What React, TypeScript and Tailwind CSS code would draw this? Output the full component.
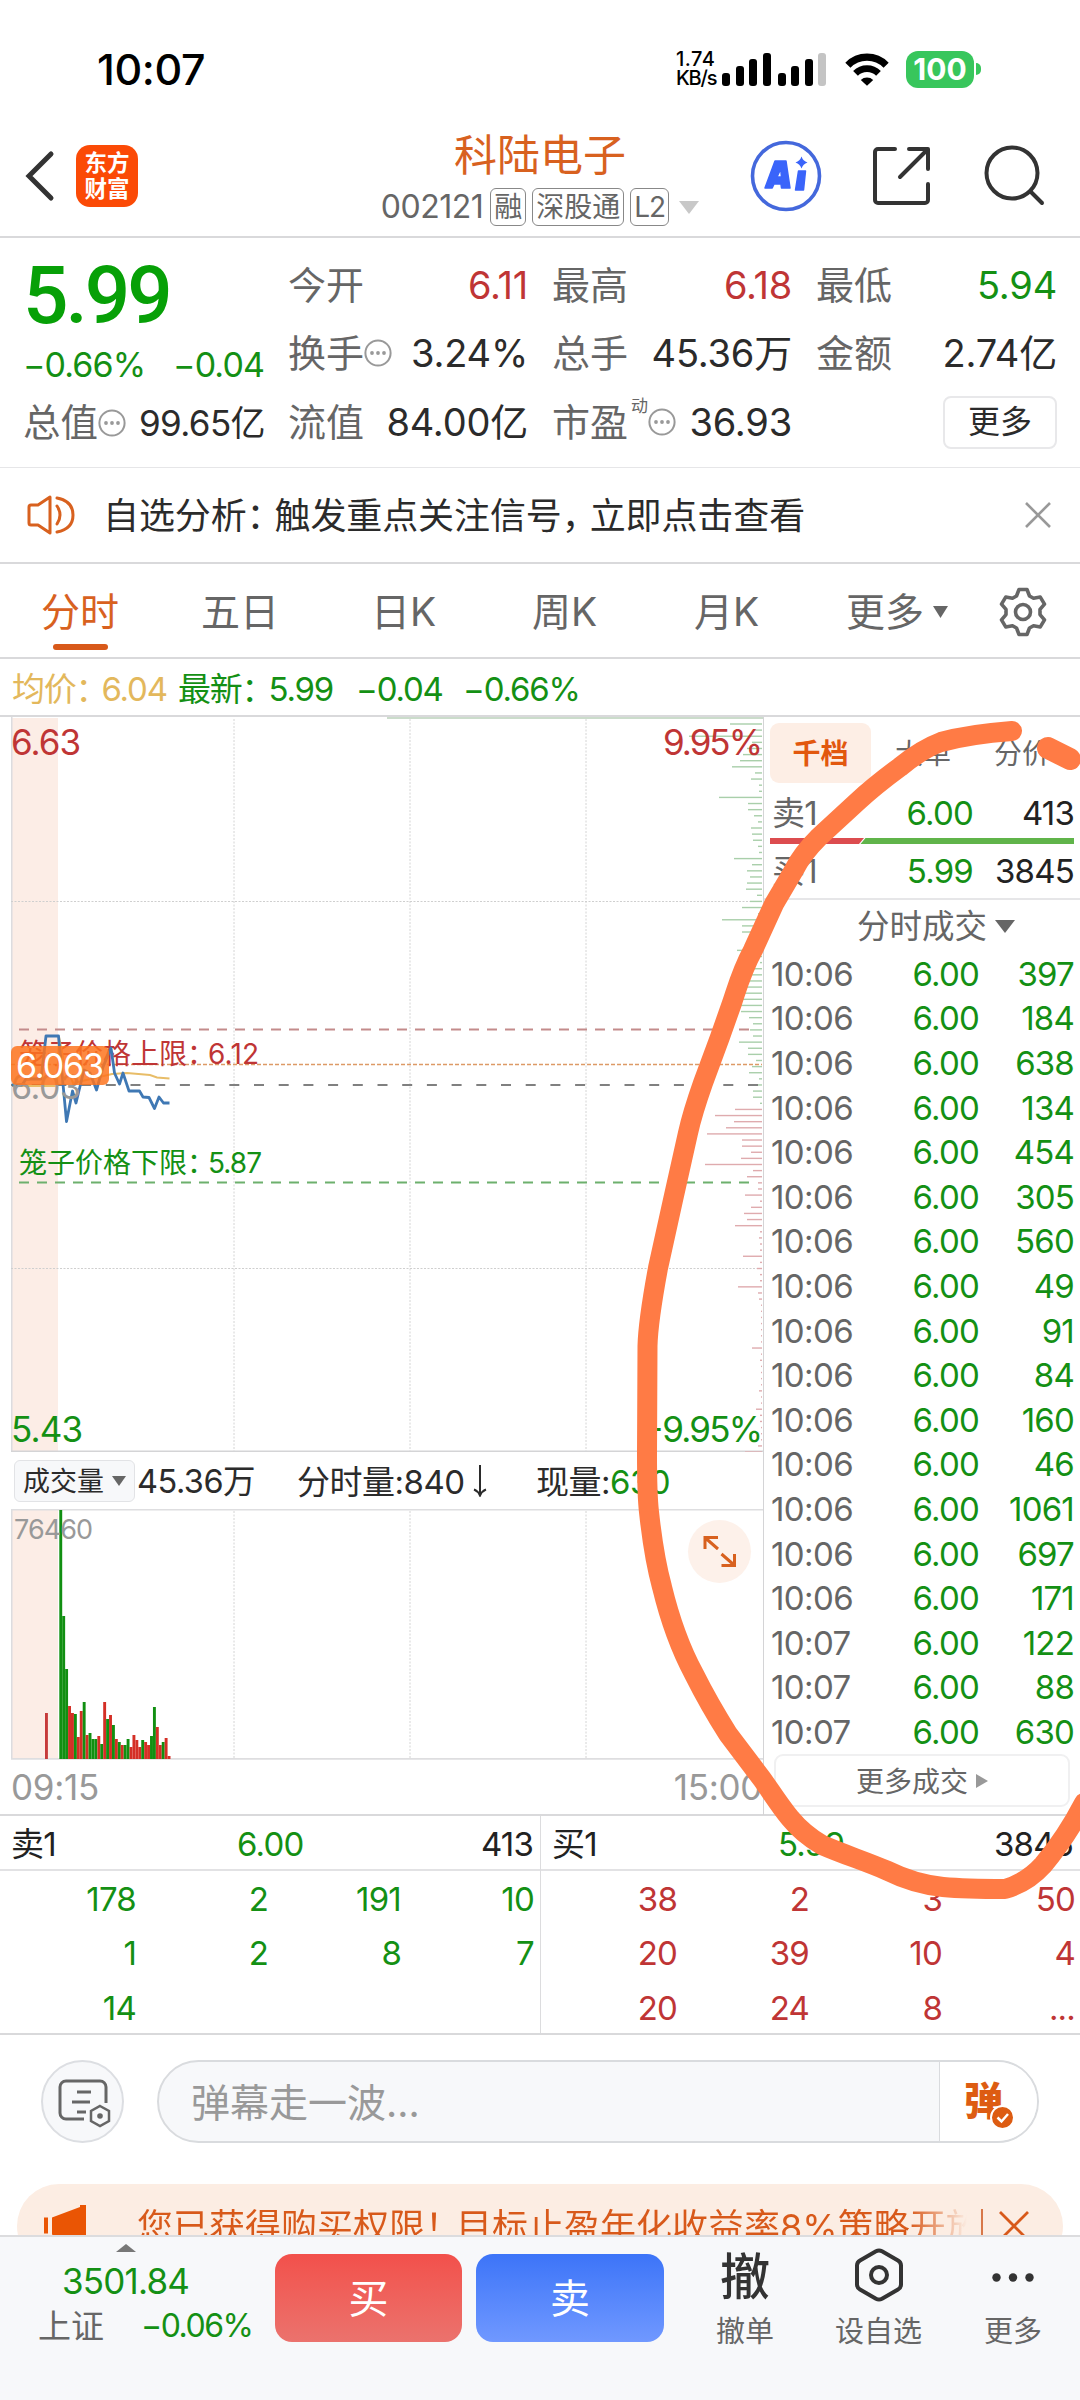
import { clsx } from 'clsx';

type Tone = 'up' | 'down' | 'plain';

const toneClass: Record<Tone, string> = {
  up: 'text-[#bf3535]',
  down: 'text-[#149014]',
  plain: 'text-[#2b2b2b]',
};

const QUOTES: { label: string; value: string; tone: Tone; hint?: boolean; sup?: string }[] = [
  { label: '今开', value: '6.11', tone: 'up' },
  { label: '最高', value: '6.18', tone: 'up' },
  { label: '最低', value: '5.94', tone: 'down' },
  { label: '换手', value: '3.24%', tone: 'plain', hint: true },
  { label: '总手', value: '45.36万', tone: 'plain' },
  { label: '金额', value: '2.74亿', tone: 'plain' },
  { label: '流值', value: '84.00亿', tone: 'plain' },
  { label: '市盈', value: '36.93', tone: 'plain', hint: true, sup: '动' },
];

const TRADES: [string, string, string][] = [
  ['10:06', '6.00', '397'],
  ['10:06', '6.00', '184'],
  ['10:06', '6.00', '638'],
  ['10:06', '6.00', '134'],
  ['10:06', '6.00', '454'],
  ['10:06', '6.00', '305'],
  ['10:06', '6.00', '560'],
  ['10:06', '6.00', '49'],
  ['10:06', '6.00', '91'],
  ['10:06', '6.00', '84'],
  ['10:06', '6.00', '160'],
  ['10:06', '6.00', '46'],
  ['10:06', '6.00', '1061'],
  ['10:06', '6.00', '697'],
  ['10:06', '6.00', '171'],
  ['10:07', '6.00', '122'],
  ['10:07', '6.00', '88'],
  ['10:07', '6.00', '630'],
];

// order book depth, top (limit up) to bottom (limit down)
const DEPTH = [
  32, 8, 73, 10, 15, 19, 22, 30, 7, 11, 3, 3, 43, 14, 14, 8, 4, 11, 10, 9, 4, 3, 28, 10, 15, 12, 15, 16, 5, 12,
  20, 4, 40, 20, 20, 10, 10, 25, 3, 2, 10, 12, 14, 17, 19, 20, 22, 21, 13, 9, 12, 9, 23, 14, 14, 6, 10, 13, 3, 11,
  9, 9, 2, 27, 47, 28, 36, 55, 20, 20, 11, 21, 57, 9, 15, 4, 4, 17, 2, 11, 18, 15, 27, 2, 3, 2, 2, 19, 2, 5,
  2, 2, 24, 4, 3, 1, 1, 1, 1, 1, 1, 1, 10, 1, 2, 1, 1, 1, 1, 3, 1, 1, 6, 2, 2, 1, 1, 1, 4, 17,
];
const SELL_LEVELS = 63;

const VOLUME: [number, 'r' | 'g'][] = [
  [249, 'g'], [143, 'g'], [90, 'g'], [53, 'r'], [46, 'r'], [45, 'g'], [22, 'r'], [48, 'r'], [57, 'g'], [24, 'r'],
  [26, 'g'], [20, 'g'], [20, 'g'], [23, 'r'], [15, 'g'], [57, 'r'], [40, 'g'], [44, 'r'], [34, 'g'], [20, 'r'],
  [17, 'g'], [14, 'r'], [14, 'g'], [20, 'g'], [12, 'r'], [24, 'r'], [19, 'r'], [12, 'r'], [19, 'g'], [17, 'r'],
  [14, 'r'], [23, 'g'], [52, 'g'], [32, 'r'], [14, 'r'], [17, 'g'], [21, 'r'], [3, 'r'],
];

const GRID_X = [223, 399, 575];

function Hint() {
  return (
    <svg className="size-[28px] shrink-0" viewBox="0 0 28 28">
      <circle cx="14" cy="14" r="12.6" fill="none" stroke="#999" strokeWidth="2" />
      <g fill="#999">
        <circle cx="8" cy="14" r="1.9" />
        <circle cx="14" cy="14" r="1.9" />
        <circle cx="20" cy="14" r="1.9" />
      </g>
    </svg>
  );
}

function SignalBars({ heights, last }: { heights: number[]; last?: string }) {
  return (
    <div className="flex items-end gap-[5.500px]">
      {heights.map((h, i) => (
        <span
          key={i}
          className={clsx('w-[8px] rounded-[3px]', i === 3 && last ? last : 'bg-black')}
          style={{ height: h }}
        />
      ))}
    </div>
  );
}

function StatusBar() {
  return (
    <div className="flex h-[110px] items-center pt-[28px]">
      <div className="ml-[97px] w-[579px] text-[43px] font-medium -tracking-[0.400px] text-black">10:07</div>
      <div className="flex w-[46px] flex-col text-[20px] leading-[19px] font-medium text-black">
        <span className="tracking-[0.500px]">1.74</span>
        <span className="-tracking-[1.200px]">KB/s</span>
      </div>
      <SignalBars heights={[13, 20, 27, 33]} />
      <div className="w-[7px]" />
      <SignalBars heights={[13, 20, 27, 33]} last="bg-[#c4c4c4]" />
      <svg className="ml-[19px] h-[33px] w-[44px]" viewBox="0 0 46 34">
        <path d="M3 12.500a28 28 0 0 1 40 0" fill="none" stroke="#000" strokeWidth="7.500" />
        <path d="M11 21a17 17 0 0 1 24 0" fill="none" stroke="#000" strokeWidth="7" />
        <path d="M16.500 28a9.500 9.500 0 0 1 13 0L23 34z" />
      </svg>
      <div className="ml-[17px] flex h-[37px] w-[68px] items-center justify-center rounded-[12px] bg-[#38c65c] text-[30px] font-bold text-white">
        100
      </div>
      <div className="ml-[2px] h-[12px] w-[5px] rounded-r-full bg-[#38c65c]" />
    </div>
  );
}

function Header() {
  return (
    <header className="flex h-[128px] border-b-2 border-[#d9d9db]">
      <svg className="mt-[40px] ml-[24px] h-[52px] w-[32px]" viewBox="0 0 32 52">
        <path d="M27 4 5 26l22 22" fill="none" stroke="#333" strokeWidth="5" strokeLinecap="round" />
      </svg>
      <div className="mt-[35px] ml-[20px] flex size-[62px] flex-col items-center justify-center rounded-[14px] bg-[#fb4a06] text-[22.500px] leading-[26px] font-bold text-white">
        <span>东方</span>
        <span>财富</span>
      </div>
      <div className="ml-[188px] flex w-[428px] flex-col items-center">
        <div className="mt-[24px] text-[43px] leading-[42px] text-[#d8611f]">科陆电子</div>
        <div className="mt-[11px] flex h-[40px] items-center text-[32px] text-[#666]">
          <span className="-tracking-[0.500px]">002121</span>
          <span className="ml-[7px] flex h-[38px] items-center rounded-[6px] border border-[#888] px-[3px] text-[28px]">融</span>
          <span className="ml-[6px] flex h-[38px] items-center rounded-[6px] border border-[#888] px-[3px] text-[28px]">深股通</span>
          <span className="ml-[6px] flex h-[38px] items-center rounded-[6px] border border-[#888] px-[3px] text-[28px] -tracking-[1px]">L2</span>
          <svg className="ml-[10px] h-[13px] w-[20px]" viewBox="0 0 20 13">
            <path d="M0 0h20L10 13z" fill="#c8c8c8" />
          </svg>
        </div>
      </div>
      <svg className="mt-[30px] ml-[-4px] size-[72px] shrink-0" viewBox="0 0 72 72">
        <circle cx="36" cy="36" r="33.500" fill="none" stroke="#4468dc" strokeWidth="3.600" />
        <path
          d="M15 48 25 21h11l4 27h-8.500l-.5-4h-7l-1.800 4zM27 37h4.500l-.8-8z"
          fill="#3a64fa"
          stroke="#3a64fa"
          strokeWidth="1.500"
          strokeLinejoin="round"
        />
        <path d="M48.500 31h7l-2 19h-8z" fill="#3a64fa" stroke="#3a64fa" strokeWidth="1.500" strokeLinejoin="round" />
        <path d="M51.500 16.500q1.500 4.500 6 6-4.500 1.500-6 6-1.500-4.500-6-6 4.500-1.500 6-6z" fill="#3a64fa" />
      </svg>
      <svg
        className="mt-[35px] ml-[49px] size-[62px] shrink-0"
        viewBox="0 0 62 62"
        fill="none"
        stroke="#333"
        strokeWidth="4"
        strokeLinecap="round"
        strokeLinejoin="round"
      >
        <path d="M24 4H7a3 3 0 0 0-3 3v48a3 3 0 0 0 3 3h47a3 3 0 0 0 3-3V39" />
        <path d="M38 4h19v20M56 5 29 32" />
      </svg>
      <svg
        className="mt-[34px] ml-[50px] size-[62px] shrink-0"
        viewBox="0 0 62 62"
        fill="none"
        stroke="#333"
        strokeWidth="4"
        strokeLinecap="round"
      >
        <circle cx="29" cy="29" r="25.500" />
        <path d="m48 48 11 11" />
      </svg>
    </header>
  );
}

function QuotePanel() {
  return (
    <section className="flex h-[230px] gap-[24px] border-b border-[#e6e6e8] px-[23px] pt-[14px]">
      <div className="w-[241px]">
        <div className="flex h-[88px] items-center font-['Roboto','Inter',sans-serif] text-[80px] font-medium -tracking-[3px] text-[#07a007]">
          5.99
        </div>
        <div className="flex h-[50px] items-center justify-between text-[34px] -tracking-[0.900px] text-[#149014]">
          <span>−0.66%</span>
          <span>−0.04</span>
        </div>
        <div className="flex h-[66px] items-center">
          <span className="text-[37.500px] text-[#666]">总值</span>
          <Hint />
          <span className="-mr-px ml-auto text-[35px] -tracking-[0.600px] text-[#2b2b2b]">99.65亿</span>
        </div>
      </div>
      <div className="grid h-[205px] w-[769px] grid-cols-[240px_240px_241px] grid-rows-[66px_69px_70px] gap-x-[24px]">
        {QUOTES.map((q) => (
          <div key={q.label} className="flex items-center">
            <span className="text-[38px] text-[#666]">{q.label}</span>
            {q.sup && <span className="-mt-[32px] ml-[3px] text-[17px] text-[#666]">{q.sup}</span>}
            {q.hint && <Hint />}
            <span className={clsx('ml-auto text-[38px] -tracking-[0.200px]', toneClass[q.tone])}>{q.value}</span>
          </div>
        ))}
        <div className="flex items-center justify-end">
          <button className="h-[53px] w-[114px] rounded-[8px] border-2 border-[#e8e8ea] text-[32px] text-[#2b2b2b]">更多</button>
        </div>
      </div>
    </section>
  );
}

function NoticeBar() {
  return (
    <section className="flex h-[96px] items-center border-b-2 border-[#d9d9db]">
      <svg
        className="ml-[26px] h-[42px] w-[50px]"
        viewBox="0 0 50 42"
        fill="none"
        stroke="#d8611f"
        strokeWidth="3"
        strokeLinejoin="round"
        strokeLinecap="round"
      >
        <path d="M24 3v36L12 31H5a2 2 0 0 1-2-2V13a2 2 0 0 1 2-2h7z" />
        <path d="M31 12q6 9 0 18M31 4q16 3 16 17T31 38" />
      </svg>
      <div className="ml-[27px] pt-[2px] text-[36px] -tracking-[0.100px] text-[#2b2b2b]">
        自选分析<span className="-mr-[8px]">：</span>触发重点关注信号<span className="-mr-[8px]">，</span>立即点击查看
      </div>
      <svg className="mr-[28px] ml-auto size-[28px]" viewBox="0 0 28 28">
        <path d="m2 2 24 24M26 2 2 26" stroke="#999" strokeWidth="2.600" />
      </svg>
    </section>
  );
}

function Gear() {
  return (
    <svg className="size-[50px]" viewBox="0 0 50 50" fill="none" stroke="#666" strokeWidth="3.600" strokeLinejoin="round">
      <path d="M21 2.500h8l2.500 6.500 4 2.300 6.800-1.200 4.200 7-4.500 5.300v5.200l4.500 5.300-4.200 7-6.800-1.200-4 2.300-2.500 6.500h-8L18.500 41l-4-2.300-6.800 1.200-4.200-7L8 27.600v-5.200l-4.500-5.300 4.200-7 6.800 1.200 4-2.300z" />
      <circle cx="25" cy="25" r="7.500" />
    </svg>
  );
}

function PeriodTabs() {
  return (
    <nav className="flex h-[95px] items-center border-b-2 border-[#d9d9db] pt-[2px] text-[39px] text-[#666]">
      <div className="relative ml-[41px] w-[160px] text-[#d8611f]">
        <span>分时</span>
        <span className="absolute top-[52px] left-[12px] h-[6px] w-[55px] rounded-full bg-[#d8591a]" />
      </div>
      <span className="w-[170px]">五日</span>
      <span className="w-[161px]">日K</span>
      <span className="w-[162px]">周K</span>
      <span className="w-[152px]">月K</span>
      <span>更多</span>
      <svg className="ml-[9px] h-[12px] w-[15px]" viewBox="0 0 15 12">
        <path d="M0 0h15L7.500 12z" fill="#666" />
      </svg>
      <span className="ml-[50px]">
        <Gear />
      </span>
    </nav>
  );
}

function LatestLine() {
  return (
    <div className="flex h-[58px] items-center border-b-2 border-[#d9d9db] pt-[4px] pl-[12px] text-[33px] -tracking-[1.200px] text-[#149014]">
      <span className="w-[166px] text-[#e3b85c]">
        均价<span className="-mr-[6px]">：</span>6.04
      </span>
      <span className="w-[178px]">
        最新<span className="-mr-[5px]">：</span>5.99
      </span>
      <span className="w-[107px]">−0.04</span>
      <span>−0.66%</span>
    </div>
  );
}

function PriceChart() {
  return (
    <svg className="block h-[735px] w-[752px]" viewBox="0 0 752 735">
      <rect x="1" y="1" width="46" height="733" fill="#fcede6" />
      <path d="M.75 0v735" stroke="#dcdcdf" strokeWidth="1.500" />
      <path d="M376 .5h376" stroke="#cbdccb" strokeWidth="3" />
      {GRID_X.map((x) => (
        <path key={x} d={`M${x} 2v732`} stroke="#d4d4d4" strokeWidth="1" strokeDasharray="2 1.500" />
      ))}
      <path d="M0 184.500h752M0 551.500h752" stroke="#cfcfcf" strokeWidth="1" strokeDasharray="2 1.500" />
      <path d="M0 734.500h752" stroke="#d4d4d6" strokeWidth="1.800" />

      {DEPTH.map((w, i) => (
        <rect
          key={i}
          x={751 - w}
          y={6.3 + i * 6.118}
          width={w}
          height="1.400"
          fill={i < SELL_LEVELS ? '#a9cfaa' : '#dfabae'}
        />
      ))}

      <path d="M8 312.500h731" stroke="#c38b8b" strokeWidth="1.800" strokeDasharray="10 8" />
      <path d="M8 465.500h731" stroke="#6db06d" strokeWidth="1.800" strokeDasharray="10 8" />
      <path d="M0 347.500h751" stroke="#dd9a66" strokeWidth="1.500" strokeDasharray="4 2" />
      <path d="M-4 368h755" stroke="#808080" strokeWidth="2" strokeDasharray="10 14.700" />

      <g fontSize="28">
        <text x="8" y="347" fill="#bf3535">
          笼子价格上限：
        </text>
        <text x="197" y="347" fill="#bf3535" textLength="51">
          6.12
        </text>
        <text x="8" y="456" fill="#149014">
          笼子价格下限：
        </text>
        <text x="197" y="456" fill="#149014" textLength="54">
          5.87
        </text>
      </g>

      <path
        d="M1 369H46L48 320 53 345 62 366 80 362 101 357 116 356 139 358 146 360.500 158.500 361.500"
        fill="none"
        stroke="#e8bd68"
        strokeWidth="2"
      />
      <path
        d="M1 368H11L15 362H30L35 319H47.500L55.500 404.500 61.500 374 65 386 73 353 79 356 85.500 373 92 350 100 331 103.500 356 108.500 367 112 356 118 374H128.500L132 380 138 380.500 143.500 391.500 148 380 152.500 386H158.500"
        fill="none"
        stroke="#3f78b4"
        strokeWidth="2.800"
        strokeLinejoin="round"
      />
      <text x="0" y="382" fontSize="34" fill="#999" textLength="70">
        6.03
      </text>
      <rect x="0" y="329" width="98" height="39" rx="6" fill="#fd741f" fillOpacity="0.85" />
      <text x="5" y="361" fontSize="34" fill="#fff" textLength="88">
        6.063
      </text>

      <g fontSize="35">
        <text x="0" y="38" fill="#bf3535" textLength="70">
          6.63
        </text>
        <text x="752" y="38" fill="#bf3535" textAnchor="end" textLength="100">
          9.95%
        </text>
        <text x="0" y="725" fill="#149014" textLength="72">
          5.43
        </text>
        <text x="752" y="725" fill="#149014" textAnchor="end" textLength="122">
          −9.95%
        </text>
      </g>
    </svg>
  );
}

function VolumeChart() {
  return (
    <svg className="block h-[251px] w-[752px]" viewBox="0 0 752 251">
      <rect x="1" y="1" width="46" height="249" fill="#fcede6" />
      <path d="M.75 0v250" stroke="#dcdcdf" strokeWidth="1.500" />
      <path d="M0 .75h752" stroke="#dedee0" strokeWidth="1.500" />
      {GRID_X.map((x) => (
        <path key={x} d={`M${x} 2v248`} stroke="#d4d4d4" strokeWidth="1" strokeDasharray="2 1.500" />
      ))}
      <path d="M0 249.800h752" stroke="#dedee0" strokeWidth="1.800" />
      <rect x="34" y="204" width="2.900" height="46" fill="#c63a3a" />
      {VOLUME.map(([h, c], i) => (
        <rect key={i} x={48.3 + i * 2.927} y={250 - h} width="2.900" height={h} fill={c === 'r' ? '#d42f26' : '#118f11'} />
      ))}
      <text x="3" y="30" fontSize="27" fill="#999" textLength="79">
        76460
      </text>
      <circle cx="708.500" cy="42.500" r="31.500" fill="#fdf1ea" />
      <path
        d="M694 40V28.500h13M695 29.500l12 10.500M723.500 45v11.500h-13M722.500 55.500l-12-10.500"
        fill="none"
        stroke="#d8611f"
        strokeWidth="3"
      />
    </svg>
  );
}

function BookRow({ side, price, size }: { side: string; price: string; size: string }) {
  return (
    <div className="flex h-[49px] items-center">
      <span className="w-[69px] text-[#666]">{side}</span>
      <span className="w-[132px] text-right text-[#149014]">{price}</span>
      <span className="ml-auto text-[#222]">{size}</span>
    </div>
  );
}

function TradePanel() {
  return (
    <aside className="h-[1098px] w-[317px] border-l border-[#d4d4d6] text-[33px] -tracking-[0.800px]">
      <div className="flex h-[72px] items-center pl-[6px] text-[28px] tracking-normal text-[#666]">
        <span className="flex h-[60px] w-[101px] items-center justify-center rounded-[9px] bg-[#fdeee5] pt-[2px] font-bold text-[#e2580e]">
          千档
        </span>
        <span className="ml-[24px] pt-[2px]">大单</span>
        <span className="ml-[43px] pt-[2px]">分价</span>
      </div>
      <div className="pr-[6px] pl-[8px]">
        <BookRow side="卖1" price="6.00" size="413" />
        <svg className="-ml-[2px] block h-[6px] w-[304px]" viewBox="0 0 304 6">
          <path d="M0 0h94l-5 6H0z" fill="#dc4c4f" />
          <path d="M95.500 0H304v6H90.500z" fill="#60b44a" />
        </svg>
        <div className="pt-[3px]">
          <BookRow side="买1" price="5.99" size="3845" />
        </div>
      </div>
      <div className="mt-[2px] flex h-[54px] items-center justify-center border-t-2 border-[#e6e6e8] pt-[3px] pl-[28px] text-[32.500px] tracking-normal text-[#666]">
        分时成交
        <svg className="-mt-[3px] ml-[8px] h-[13px] w-[20px]" viewBox="0 0 20 13">
          <path d="M0 0h20L10 13z" fill="#666" />
        </svg>
      </div>
      <div className="pr-[6px] pl-[7px]">
        {TRADES.map(([time, price, size], i) => (
          <div key={i} className="flex h-[44.600px] items-center text-[#149014]">
            <span className="w-[90px] -tracking-[0.600px] text-[#666]">{time}</span>
            <span className="w-[118px] text-right">{price}</span>
            <span className="ml-auto">{size}</span>
          </div>
        ))}
      </div>
      <button className="-mt-px ml-[10px] flex h-[53px] w-[296px] items-center justify-center rounded-[9px] border-2 border-[#f0f0f1] pt-[3px] text-[28px] tracking-normal text-[#666]">
        更多成交
        <svg className="-mt-[2px] ml-[8px] h-[14px] w-[12px]" viewBox="0 0 12 14">
          <path d="M0 0v14l12-7z" fill="#999" />
        </svg>
      </button>
    </aside>
  );
}

function ChartArea() {
  return (
    <section className="flex h-[1099px] border-b-2 border-[#d9d9db]">
      <div className="w-[763px] pl-[11px]">
        <PriceChart />
        <div className="flex h-[57px] items-center text-[33px] -tracking-[0.500px] text-[#2b2b2b]">
          <span className="ml-[3px] flex h-[42px] w-[121px] items-center rounded-[6px] border border-[#e2e3e6] bg-[#f7f8fa] pt-[2px] pl-[8px] text-[27px] tracking-normal">
            成交量
            <svg className="-mt-[2px] ml-[8px] h-[10px] w-[14px]" viewBox="0 0 14 10">
              <path d="M0 0h14L7 10z" fill="#666" />
            </svg>
          </span>
          <span className="ml-[2px] w-[160px] pt-[3px] text-[32.500px]">45.36万</span>
          <span className="w-[176px] pt-[3px]">分时量:840</span>
          <svg className="h-[32px] w-[14px]" viewBox="0 0 14 32">
            <path d="M7 0v30M1 24.500q4 1.500 6 6 2-4.500 6-6" fill="none" stroke="#2b2b2b" strokeWidth="2" />
          </svg>
          <span className="ml-[49px] pt-[3px]">现量:</span>
          <span className="pt-[3px] text-[#149014]">630</span>
        </div>
        <VolumeChart />
        <div className="flex h-[54px] items-center justify-between pr-px text-[35px] -tracking-[0.300px] text-[#999]">
          <span>09:15</span>
          <span>15:00</span>
        </div>
      </div>
      <TradePanel />
    </section>
  );
}

interface OrderQueueProps {
  side: string;
  price: string;
  total: string;
  tone: Tone;
  rows: string[][];
}

function OrderQueue({ side, price, total, tone, rows }: OrderQueueProps) {
  return (
    <div className="w-[540px] text-[33px] -tracking-[0.800px]">
      <div className="flex h-[55px] items-center border-b-2 border-[#e2e2e4] pt-[4px] pr-[7px] pl-[11px] text-[#222]">
        <span className="w-[226px]">{side}</span>
        <span className="text-[#149014]">{price}</span>
        <span className="ml-auto">{total}</span>
      </div>
      {rows.map((row, i) => (
        <div
          key={i}
          className={clsx('grid h-[54.500px] grid-cols-[136px_132px_133px_133px] items-center pt-[2px] text-right', toneClass[tone])}
        >
          {row.map((n, j) => (
            <span key={j}>{n}</span>
          ))}
        </div>
      ))}
    </div>
  );
}

function CommentBar() {
  return (
    <section className="flex h-[149px] items-start pt-[25px] pl-[41px]">
      <div className="flex size-[83px] items-center justify-center rounded-full border-2 border-[#dcdee2] bg-[#f7f8fa]">
        <svg className="mt-[2px] ml-[4px] h-[50px] w-[56px]" viewBox="0 0 56 50" fill="none" stroke="#666" strokeWidth="3">
          <path d="M27 41H9a6 6 0 0 1-6-6V9a6 6 0 0 1 6-6h34a6 6 0 0 1 6 6v16" />
          <path d="M20 14h14M15 24h18M20 34h9" />
          <path d="m43 28 9 5v10l-9 5-9-5V33z" strokeWidth="2.500" />
          <circle cx="43" cy="38" r="2.800" fill="#666" stroke="none" />
        </svg>
      </div>
      <div className="ml-[33px] flex h-[83px] w-[882px] overflow-hidden rounded-full border-2 border-[#d9dbde] bg-[#f7f8fa]">
        <div className="flex flex-1 items-center pt-px pl-[32px] text-[39px] text-[#999]">弹幕走一波…</div>
        <div className="relative flex w-[98px] items-center border-l border-[#d9dbde] bg-white pb-[3px] pl-[24px] text-[39px] font-black text-[#dd5c12]">
          弹
          <svg className="absolute top-[43px] left-[50px] size-[25px]" viewBox="0 0 25 25">
            <circle cx="12.500" cy="12.500" r="11.500" fill="#dd5c12" stroke="#fff" strokeWidth="2" />
            <path d="m7.500 12.500 4 4 6.500-7.500" fill="none" stroke="#fff" strokeWidth="2.500" />
          </svg>
        </div>
      </div>
    </section>
  );
}

function PromoBanner() {
  return (
    <div className="h-[51px] overflow-hidden px-[17px]">
      <div className="flex h-[84px] items-center rounded-full bg-[#fcede3] pl-[27px]">
        <svg className="h-[42px] w-[43px]" viewBox="0 0 43 42">
          <path d="M0 12.500h4v16H0zM8 12.500 36 2V0h6v42H14l-6-13z" fill="#ea5504" />
        </svg>
        <div className="ml-[50px] w-[830px] overflow-hidden bg-linear-to-r from-[#d8591a] from-93% to-transparent bg-clip-text pt-[2px] text-[36px] leading-[44px] whitespace-nowrap text-transparent">
          您已获得购买权限<span className="-mr-[5px]">！</span>目标止盈年化收益率8%策略开放
        </div>
        <div className="ml-[14px] h-[34px] w-[2px] bg-[#d8784a]" />
        <svg className="ml-[16px] size-[30px]" viewBox="0 0 30 30">
          <path d="m1 1 28 28M29 1 1 29" stroke="#d8591a" strokeWidth="2.800" />
        </svg>
      </div>
    </div>
  );
}

function BottomBar() {
  return (
    <footer className="flex h-[165px] border-t-2 border-[#dcdcde] bg-[#f7f8fa]">
      <div className="flex w-[275px] flex-col">
        <svg className="mt-[7px] ml-[116px] h-[8px] w-[20px]" viewBox="0 0 20 8">
          <path d="M0 8h20L10 0z" fill="#777" />
        </svg>
        <div className="mt-[11px] ml-[62px] text-[35px] leading-[36px] -tracking-[0.800px] text-[#149014]">3501.84</div>
        <div className="mt-[9px] flex h-[36px] items-center">
          <span className="ml-[38px] w-[103px] text-[33px] text-[#666]">上证</span>
          <span className="text-[32px] -tracking-[1.500px] text-[#149014]">−0.06%</span>
        </div>
      </div>
      <button className="mt-[17px] h-[88px] w-[187px] rounded-[17px] bg-linear-to-b from-[#f2504b] to-[#eb726d] pt-[2px] text-[40px] text-white">
        买
      </button>
      <button className="mt-[17px] ml-[14px] h-[88px] w-[188px] rounded-[17px] bg-linear-to-b from-[#3c74f8] to-[#7098ff] pt-[2px] text-[40px] text-white">
        卖
      </button>
      <div className="ml-[30px] flex w-[102px] flex-col items-center text-[29px] text-[#666]">
        <span className="mt-[15px] h-[50px] text-[50px] font-medium text-[#333]">撤</span>
        <span className="mt-[15px]">撤单</span>
      </div>
      <div className="ml-[21px] flex w-[123px] flex-col items-center text-[29px] text-[#666]">
        <svg className="mt-[11px] h-[54px] w-[50px]" viewBox="0 0 50 54" fill="none" stroke="#333" strokeWidth="4">
          <path d="M22 3.300q3-1.700 6 0l16 9.200q3 1.700 3 5v19q0 3.300-3 5l-16 9.200q-3 1.700-6 0L6 41.500q-3-1.700-3-5v-19q0-3.300 3-5z" />
          <circle cx="25" cy="27" r="8" />
        </svg>
        <span className="mt-[15px]">设自选</span>
      </div>
      <div className="ml-[22px] flex w-[102px] flex-col items-center text-[29px] text-[#666]">
        <svg className="mt-[11px] h-[54px] w-[50px]" viewBox="0 0 50 54" fill="#333">
          <circle cx="8.500" cy="29.500" r="4.200" />
          <circle cx="25" cy="29.500" r="4.200" />
          <circle cx="41.500" cy="29.500" r="4.200" />
        </svg>
        <span className="mt-[15px]">更多</span>
      </div>
    </footer>
  );
}

// hand-drawn marker circle around the trade panel
function MarkerStroke() {
  return (
    <svg
      className="pointer-events-none absolute top-0 left-0 h-[2400px] w-[1080px]"
      viewBox="0 0 1080 2400"
      fill="none"
      stroke="#ff7b45"
      strokeLinecap="round"
      strokeLinejoin="round"
    >
      <path
        d="M1012 731C985 733 963 736 941 742C925 748 912 757 900 767C885 778 871 789 857 802L819 837C808 848 800 858 794 870L774 904L753 950C742 970 738 985 732 1003L720 1037L703 1083C697 1100 692 1115 688 1133L673 1200L658 1268C653 1295 648 1325 647.500 1346L647 1453C647 1480 647 1495 649 1512C652 1540 656 1565 662 1587C670 1620 680 1648 694 1674C704 1694 716 1715 728 1734L762 1779C772 1793 780 1806 790 1818C799 1829 810 1838 822 1845C845 1855 865 1861 888 1871C906 1880 924 1885 943 1887C965 1889 985 1889 1005 1889C1022 1884 1034 1875 1043 1865C1058 1847 1070 1830 1084 1803"
        strokeWidth="20"
      />
      <path d="M1048 748 1070 759" strokeWidth="22" />
    </svg>
  );
}

export default function App() {
  return (
    <div className="relative h-[2400px] w-[1080px] overflow-hidden bg-white font-['Inter','Noto_Sans_CJK_SC',sans-serif] leading-none">
      <StatusBar />
      <Header />
      <QuotePanel />
      <NoticeBar />
      <PeriodTabs />
      <LatestLine />
      <ChartArea />
      <section className="flex h-[219px] border-b-2 border-[#d9d9db]">
        <div className="border-r border-[#dcdcde]">
          <OrderQueue
            side="卖1"
            price="6.00"
            total="413"
            tone="down"
            rows={[['178', '2', '191', '10'], ['1', '2', '8', '7'], ['14']]}
          />
        </div>
        <OrderQueue
          side="买1"
          price="5.99"
          total="3845"
          tone="up"
          rows={[['38', '2', '3', '50'], ['20', '39', '10', '4'], ['20', '24', '8', '...']]}
        />
      </section>
      <CommentBar />
      <PromoBanner />
      <BottomBar />
      <MarkerStroke />
    </div>
  );
}
